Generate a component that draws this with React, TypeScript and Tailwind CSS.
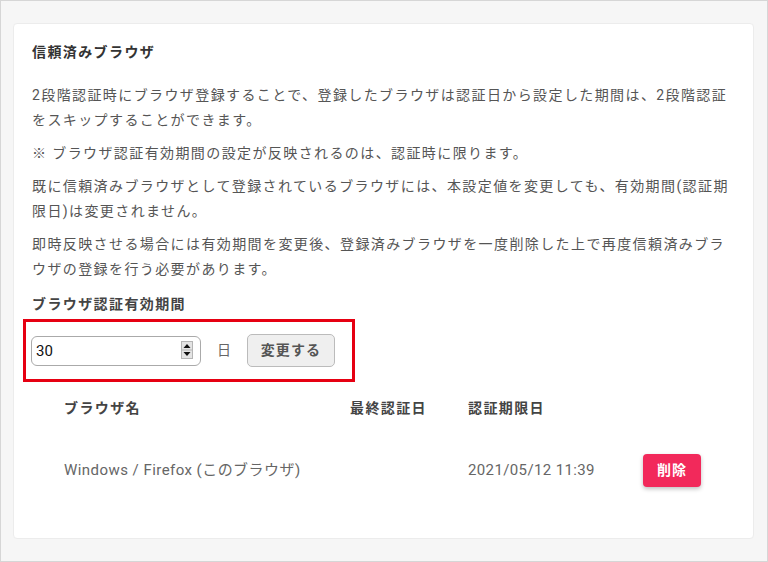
import { useState } from "react"

const FONT = "font-['Roboto','Noto_Sans_CJK_JP',sans-serif]"

const PARAGRAPHS = [
  "2段階認証時にブラウザ登録することで、登録したブラウザは認証日から設定した期間は、2段階認証をスキップすることができます。",
  "※ ブラウザ認証有効期間の設定が反映されるのは、認証時に限ります。",
  "既に信頼済みブラウザとして登録されているブラウザには、本設定値を変更しても、有効期間(認証期限日)は変更されません。",
  "即時反映させる場合には有効期間を変更後、登録済みブラウザを一度削除した上で再度信頼済みブラウザの登録を行う必要があります。",
]

function Spinner() {
  return (
    <svg width="12" height="18" viewBox="0 0 12 18" className="absolute right-[8px] top-[5px]">
      <rect x="0.5" y="0.5" width="11" height="17" fill="#e4e4e4" stroke="#b5b5b5" />
      <line x1="1" y1="9" x2="11" y2="9" stroke="#b5b5b5" />
      <path d="M2.5 7 L6 3 L9.5 7 Z" fill="#111" />
      <path d="M2.5 11 L6 15 L9.5 11 Z" fill="#111" />
    </svg>
  )
}

export default function App() {
  const [days, setDays] = useState("30")

  return (
    <div className={`w-[768px] h-[562px] bg-[#f6f6f6] border border-[#d6d6d6] pt-[22px] pl-[12px] pr-[13px] ${FONT}`}>
      <div className="h-[516px] bg-white rounded-[4px] border border-[#ececec] px-[18px] pt-[16px]">
        <h2 className="text-[14px] leading-[25px] tracking-[0.1em] font-bold text-[#333] mb-[18px]">
          信頼済みブラウザ
        </h2>

        <div className="flex flex-col gap-[8px]">
          {PARAGRAPHS.map(p => (
            <p key={p} className="text-[14px] leading-[25px] tracking-[0.1em] text-[#555]">{p}</p>
          ))}
        </div>

        <h3 className="mt-[10px] text-[14px] leading-[25px] tracking-[0.1em] font-bold text-[#444]">
          ブラウザ認証有効期間
        </h3>

        <div className="-ml-[9px] mt-[2px] w-[332px] border-[3px] border-[#e60012] pl-[5px] pt-[12px] pb-[12px] flex items-center">
          <div className="relative">
            <input
              value={days}
              onChange={e => setDays(e.target.value)}
              className="w-[170px] h-[30px] rounded-[6px] border border-[#aaa] pl-[4px] text-[15px] text-[#111] outline-none"
            />
            <Spinner />
          </div>
          <span className="ml-[16px] text-[14px] text-[#666]">日</span>
          <button className="ml-[16px] w-[88px] h-[33px] rounded-[5px] border border-[#bbb] bg-[#efefef] text-[14px] font-bold tracking-[0.08em] text-[#555]">
            変更する
          </button>
        </div>

        <div className="pl-[32px]">
          <div className="grid grid-cols-[286px_118px_175px_58px] h-[52px] items-center text-[14px] font-bold tracking-[0.1em] text-[#444]">
            <span>ブラウザ名</span>
            <span>最終認証日</span>
            <span>認証期限日</span>
            <span />
          </div>
          <div className="grid grid-cols-[286px_118px_175px_58px] h-[72px] items-center text-[15px] text-[#666]">
            <span className="tracking-[0.03em]">Windows / Firefox (このブラウザ)</span>
            <span />
            <span className="tracking-[0.025em]">2021/05/12 11:39</span>
            <button className="h-[33px] rounded-[4px] bg-[#f2295b] text-[14px] text-white font-bold tracking-[0.08em] shadow-[0_2px_4px_rgba(0,0,0,0.25)]">
              削除
            </button>
          </div>
        </div>
      </div>
    </div>
  )
}
